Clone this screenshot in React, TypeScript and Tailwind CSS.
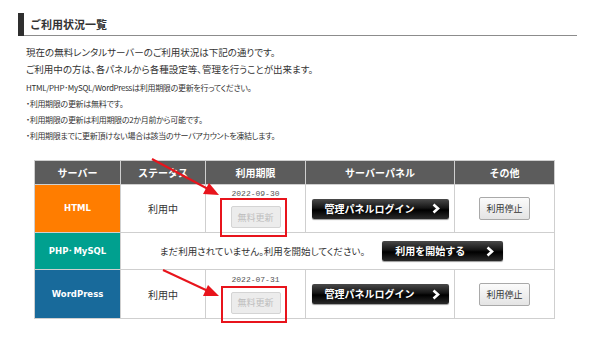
import React from "react";

const Chevron = () => (
  <svg width="8" height="11" viewBox="0 0 8 11" className="shrink-0">
    <polyline points="1.5,1.5 6,5.5 1.5,9.5" fill="none" stroke="white" strokeWidth="2.6" strokeLinejoin="miter" />
  </svg>
);

const BlackButton = ({ label, w }: { label: string; w: string }) => (
  <div
    className={`${w} h-[20px] flex items-center justify-between pl-[13px] pr-[9px] rounded-[2px] bg-[linear-gradient(#4a4a4a,#151515_45%,#000_55%,#2a2a2a)] shadow-[0_1px_1px_rgba(0,0,0,0.4)] text-white font-bold text-[10px] leading-none`}
  >
    <span>{label}</span>
    <Chevron />
  </div>
);

const StopButton = () => (
  <div className="w-[51px] h-[23px] flex items-center justify-center border border-[#a9a9a9] rounded-[2px] bg-[linear-gradient(#fbfbfb,#e4e4e4)] text-[9px] text-[#333] leading-none">
    利用停止
  </div>
);

const Renew = ({ date }: { date: string }) => (
  <div className="flex flex-col items-center">
    <div className="h-[10px] leading-[10px] text-[8px] text-[#555] font-['Liberation_Mono',monospace]">{date}</div>
    <div className="mt-[7px] w-[50px] h-[22px] flex items-center justify-center border border-[#d4d4d4] rounded-[2px] bg-[#ececec] text-[9px] text-[#bdbdbd] leading-none">
      無料更新
    </div>
  </div>
);

const Head = ({ t }: { t: string }) => (
  <div className="bg-[#5c5c5c] flex items-center justify-center text-white font-bold text-[10px]">{t}</div>
);

const Cell = ({ children }: { children?: React.ReactNode }) => (
  <div className="bg-white flex items-center justify-center text-[10px] text-[#333]">{children}</div>
);

const Label = ({ t, bg }: { t: string; bg: string }) => (
  <div className={`${bg} flex items-center justify-center text-white font-bold text-[8.5px] font-['DejaVu_Sans',sans-serif]`}>{t}</div>
);

export default function App() {
  return (
    <div className="relative w-[600px] h-[343px] bg-white overflow-hidden font-['Noto_Sans_CJK_JP',sans-serif] text-[#333]">
      <div className="ml-[18px] mr-[23px] mt-[13px] flex h-[23px] border-b border-[#8c8c8c]">
        <div className="w-[6px] bg-[#2f2f2f] -mb-px" />
        <div className="ml-[6px] text-[11px] font-bold leading-[22px] text-[#333]">ご利用状況一覧</div>
      </div>

      <div className="ml-[26px] mt-[8px] text-[9.5px] leading-[17px] [font-feature-settings:'palt']">
        <p>現在の無料レンタルサーバーのご利用状況は下記の通りです。</p>
        <p>ご利用中の方は、各パネルから各種設定等、管理を行うことが出来ます。</p>
      </div>
      <div className="ml-[26px] mt-[2px] text-[8px] leading-[16px] tracking-[-0.3px] [font-feature-settings:'palt']">
        <p>HTML/PHP･MySQL/WordPressは利用期限の更新を行ってください。</p>
        <p>・利用期限の更新は無料です。</p>
        <p>・利用期限の更新は利用期限の2か月前から可能です。</p>
        <p>・利用期限までに更新頂けない場合は該当のサーバアカウントを凍結します。</p>
      </div>

      <div className="ml-[34px] mt-[16px] w-[521px] grid grid-cols-[85px_84px_99px_148px_99px] grid-rows-[23px_47px_36px_48px] gap-px p-px bg-[#cfcfcf]">
        <Head t="サーバー" />
        <Head t="ステータス" />
        <Head t="利用期限" />
        <Head t="サーバーパネル" />
        <Head t="その他" />

        <Label t="HTML" bg="bg-[#ff7d00]" />
        <Cell>利用中</Cell>
        <Cell>
          <Renew date="2022-09-30" />
        </Cell>
        <Cell>
          <BlackButton label="管理パネルログイン" w="w-[137px]" />
        </Cell>
        <Cell>
          <StopButton />
        </Cell>

        <Label t="PHP･MySQL" bg="bg-[#00a08f]" />
        <div className="col-span-4 bg-white flex items-center justify-center pr-[12px]">
          <span className="text-[9.5px] text-[#333] [font-feature-settings:'palt']">まだ利用されていません。利用を開始してください。</span>
          <div className="ml-[17px]">
            <BlackButton label="利用を開始する" w="w-[121px]" />
          </div>
        </div>

        <Label t="WordPress" bg="bg-[#186a9b]" />
        <Cell>利用中</Cell>
        <Cell>
          <Renew date="2022-07-31" />
        </Cell>
        <Cell>
          <BlackButton label="管理パネルログイン" w="w-[137px]" />
        </Cell>
        <Cell>
          <StopButton />
        </Cell>
      </div>

      <div className="absolute left-[220px] top-[198px] w-[67px] h-[39px] border-2 border-[#e8141c]" />
      <div className="absolute left-[221px] top-[286px] w-[66px] h-[37px] border-2 border-[#e8141c]" />

      <svg className="absolute left-0 top-0 pointer-events-none" width="600" height="343" viewBox="0 0 600 343">
        <line x1="152" y1="159" x2="208" y2="189" stroke="#e8141c" strokeWidth="2" />
        <polygon points="219,195 203,194 209,183" fill="#e8141c" />
        <line x1="163" y1="270" x2="208" y2="291" stroke="#e8141c" strokeWidth="2" />
        <polygon points="219,296 203,296 208,285" fill="#e8141c" />
      </svg>
    </div>
  );
}
